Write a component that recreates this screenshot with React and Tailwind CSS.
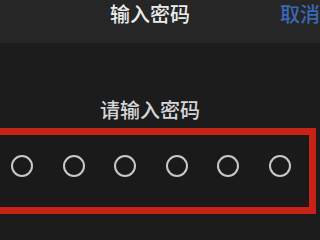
export default function App() {
  const font = { fontFamily: '"Noto Sans CJK SC", "Noto Sans", sans-serif' };
  return (
    <div className="w-[320px] h-[240px] overflow-hidden bg-[#1c1c1d] flex flex-col" style={font}>
      <div className="h-[43px] shrink-0 bg-[#262626] flex items-start whitespace-nowrap">
        <div className="ml-[110px] mt-[1px] text-[20px] leading-[25px] font-medium text-[#ececec]">输入密码</div>
        <div className="ml-[90px] mt-[1px] text-[20px] leading-[25px] font-medium text-[#3a68b8]">取消</div>
      </div>
      <div className="mt-[54px] ml-[100px] text-[20px] leading-[25px] font-medium text-[#d6d6d6] whitespace-nowrap">请输入密码</div>
      <div className="mt-[6px] w-[316px] h-[86px] border-y-[7px] border-r-[7px] border-[#c92318] bg-[#1a1a1b] flex items-start pl-[11px] pt-[20px] gap-[29.5px]">
        {[0, 1, 2, 3, 4, 5].map((i) => (
          <div key={i} className="w-[22px] h-[22px] rounded-full border-2 border-[#c8c8c8] shrink-0" />
        ))}
      </div>
    </div>
  );
}
